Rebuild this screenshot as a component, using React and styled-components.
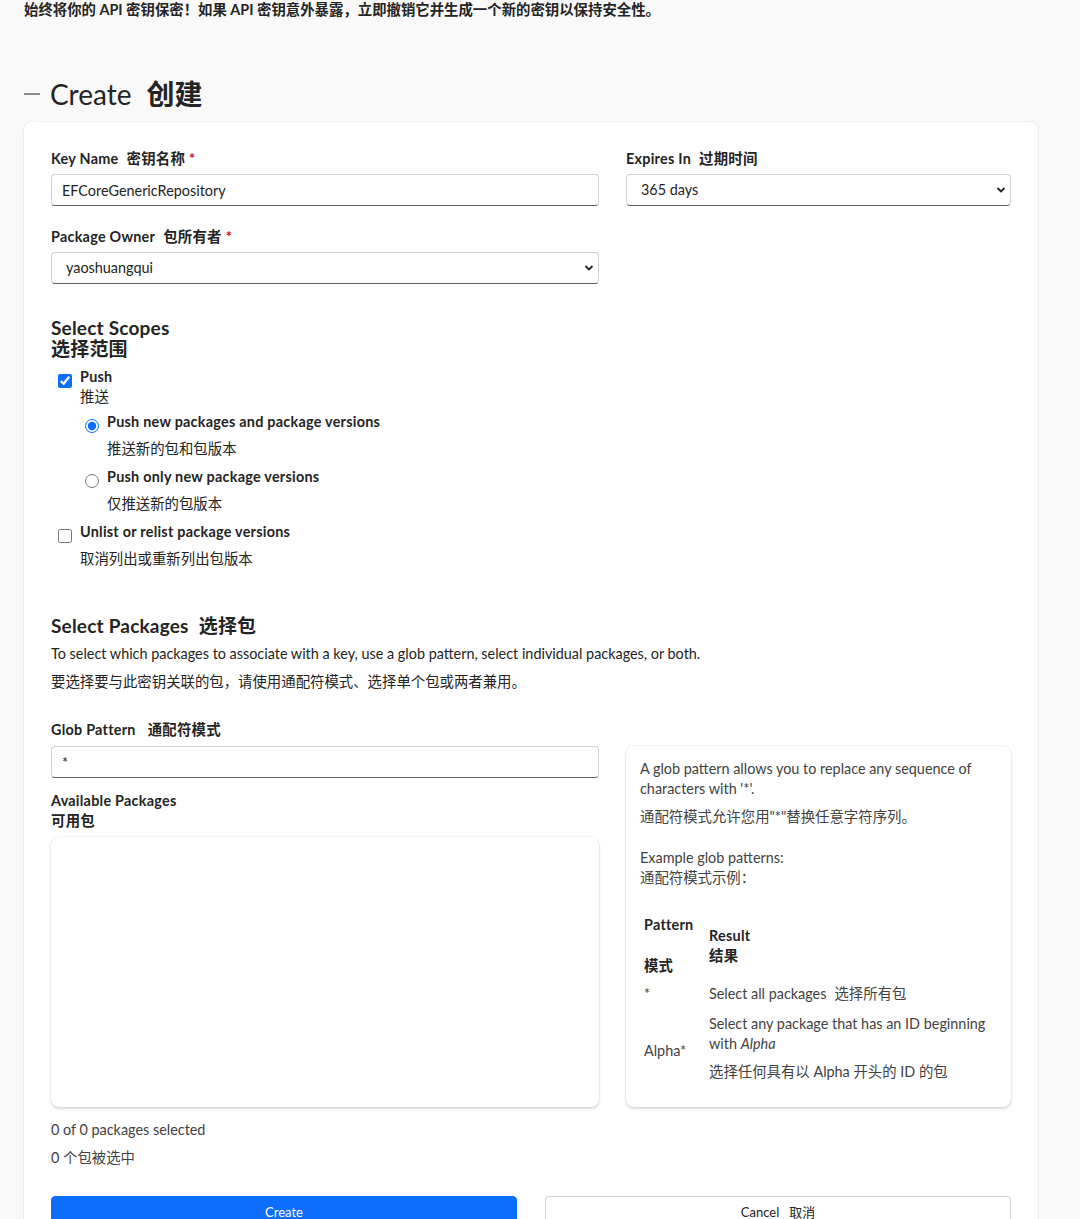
import React from 'react';
import styled, { createGlobalStyle } from 'styled-components';

const GlobalStyle = createGlobalStyle`
  html, body {
    margin: 0;
    padding: 0;
    background: #f9f9f9;
  }
  body {
    font-family: Lato, "Noto Sans CJK SC", sans-serif;
    font-size: 14.4px;
    line-height: 20px;
    color: #242424;
  }
  * { box-sizing: border-box; }
`;

const Page = styled.div`
  padding: 0 42px 0 24px;
`;

const Notice = styled.div`
  font-weight: 700;
  line-height: 20px;
`;

const Title = styled.h1`
  display: flex;
  align-items: center;
  margin: 56px 0 10px;
  font-size: 28px;
  line-height: 36px;
  font-weight: 400;
  & > b {
    margin-left: 15px;
    font-weight: 700;
  }
`;

const Dash = styled.span`
  width: 16px;
  height: 2px;
  margin-right: 10px;
  background: #8a8a8a;
`;

const Card = styled.div`
  background: #fff;
  border-radius: 8px;
  box-shadow: 0 0 2px rgba(0, 0, 0, 0.12), 0 1px 2px rgba(0, 0, 0, 0.08);
  padding: 27px 26px 40px 27px;
`;

const Columns = styled.div`
  display: grid;
  grid-template-columns: 548px 385px;
  column-gap: 27px;
  align-items: ${p => p.$stretch ? 'stretch' : 'start'};
`;

const Stack = styled.div`
  display: flex;
  flex-direction: column;
`;

const Label = styled.label`
  display: block;
  font-weight: 700;
  letter-spacing: 0.25px;
  margin: ${p => p.$top || 0}px 0 ${p => p.$bottom ?? 5}px;
  & > span { margin-left: ${p => p.$gap || 8}px; }
  & > em {
    font-style: normal;
    color: #c50f1f;
    margin-left: 4px;
  }
`;

const TextInput = styled.input`
  width: 100%;
  height: 32px;
  padding: 0 10px;
  border: 1px solid #d1d1d1;
  border-bottom-color: #616161;
  border-radius: 4px;
  font: inherit;
  color: #242424;
  background: #fff;
  outline: none;
`;

const SelectWrap = styled.div`
  position: relative;
  & > svg {
    position: absolute;
    right: 5px;
    top: 12px;
    pointer-events: none;
  }
`;

const Select = styled.select`
  width: 100%;
  height: 32px;
  padding: 0 28px 0 ${p => p.$pad || 14}px;
  border: 1px solid #d1d1d1;
  border-bottom-color: #616161;
  border-radius: 4px;
  font: inherit;
  color: #242424;
  background: #fff;
  appearance: none;
  outline: none;
`;

const SectionTitle = styled.h2`
  margin: ${p => p.$top}px 0 0;
  font-size: 19px;
  line-height: 21px;
  letter-spacing: 0.2px;
  font-weight: 700;
  & > span { margin-left: 10px; }
`;

const CheckRow = styled.label`
  display: flex;
  align-items: flex-start;
  gap: 8px;
  margin: ${p => p.$top || 0}px 0 0 ${p => p.$indent || 7}px;
  font-weight: 700;
  & > div { letter-spacing: 0.25px; }
  & > input {
    width: 14px;
    height: 14px;
    margin: 7px 0 0;
    accent-color: #0d6efd;
    flex: none;
  }
`;

const Sub = styled.div`
  font-weight: 400;
  letter-spacing: 0;
  margin-top: ${p => p.$top || 0}px;
`;

const Text = styled.p`
  margin: ${p => p.$top || 0}px 0 0;
  color: ${p => p.$muted ? '#424242' : '#242424'};
`;

const ListBox = styled.div`
  flex: 1;
  margin-top: 6px;
  min-height: 270px;
  border-radius: 8px;
  background: #fff;
  box-shadow: 0 0 2px rgba(0, 0, 0, 0.12), 0 2px 3px rgba(0, 0, 0, 0.14);
`;

const HelpCard = styled.div`
  border-radius: 8px;
  background: #fff;
  padding: 13px 14px;
  color: #424242;
  box-shadow: 0 0 2px rgba(0, 0, 0, 0.12), 0 2px 3px rgba(0, 0, 0, 0.14);
`;

const PatternTable = styled.div`
  display: grid;
  grid-template-columns: 65px 1fr;
  align-items: center;
  margin-top: 23px;
`;

const Cell = styled.div`
  padding: ${p => p.$pad || '4px 4px'};
  color: ${p => p.$head ? '#242424' : '#424242'};
  font-weight: ${p => p.$head ? 700 : 400};
  letter-spacing: ${p => p.$head ? 0.25 : 0}px;
`;

const Buttons = styled.div`
  display: grid;
  grid-template-columns: 466px 466px;
  column-gap: 28px;
  margin-top: 28px;
`;

const Button = styled.button`
  height: 32px;
  border-radius: 4px;
  font: inherit;
  font-size: 13px;
  border: 1px solid ${p => p.$primary ? '#0d6efd' : '#d1d1d1'};
  background: ${p => p.$primary ? '#0d6efd' : '#fff'};
  color: ${p => p.$primary ? '#fff' : '#242424'};
  padding: 0;
  & > span { margin-left: 10px; }
`;

const Chevron = () => (
  <svg width="10" height="8" viewBox="0 0 10 8">
    <polyline points="1.5,2 5,5.5 8.5,2" fill="none" stroke="#242424" strokeWidth="1.8" />
  </svg>
);

const Dropdown = ({ value, pad }) => (
  <SelectWrap>
    <Select $pad={pad} defaultValue={value}>
      <option>{value}</option>
    </Select>
    <Chevron />
  </SelectWrap>
);

export default function App() {
  return (
    <>
      <GlobalStyle />
      <Page>
        <Notice>始终将你的 API 密钥保密！如果 API 密钥意外暴露，立即撤销它并生成一个新的密钥以保持安全性。</Notice>

        <Title><Dash />Create<b>创建</b></Title>

        <Card>
          <Columns>
            <Stack>
              <Label>Key Name<span>密钥名称</span><em>*</em></Label>
              <TextInput defaultValue="EFCoreGenericRepository" />
              <Label $top={21}>Package Owner<span>包所有者</span><em>*</em></Label>
              <Dropdown value="yaoshuangqui" pad={14} />
            </Stack>
            <Stack>
              <Label>Expires In<span>过期时间</span></Label>
              <Dropdown value="365 days" pad={14} />
            </Stack>
          </Columns>

          <SectionTitle $top={33}>Select Scopes<br />选择范围</SectionTitle>

          <CheckRow $top={8}>
            <input type="checkbox" defaultChecked />
            <div>Push<Sub>推送</Sub></div>
          </CheckRow>
          <CheckRow $top={5} $indent={34}>
            <input type="radio" name="push" defaultChecked />
            <div>Push new packages and package versions<Sub $top={7}>推送新的包和包版本</Sub></div>
          </CheckRow>
          <CheckRow $top={8} $indent={34}>
            <input type="radio" name="push" />
            <div>Push only new package versions<Sub $top={7}>仅推送新的包版本</Sub></div>
          </CheckRow>
          <CheckRow $top={8}>
            <input type="checkbox" />
            <div>Unlist or relist package versions<Sub $top={7}>取消列出或重新列出包版本</Sub></div>
          </CheckRow>

          <SectionTitle $top={46}>Select Packages<span>选择包</span></SectionTitle>
          <Text $top={8}>To select which packages to associate with a key, use a glob pattern, select individual packages, or both.</Text>
          <Text $top={8}>要选择要与此密钥关联的包，请使用通配符模式、选择单个包或两者兼用。</Text>

          <Label $top={28} $gap={12} $bottom={6}>Glob Pattern<span>通配符模式</span></Label>
          <Columns $stretch>
            <Stack>
              <TextInput defaultValue="*" />
              <Label $top={13} $bottom={0}>Available Packages<br />可用包</Label>
              <ListBox />
            </Stack>
            <HelpCard>
              <div>A glob pattern allows you to replace any sequence of characters with '*'.</div>
              <Text $muted $top={8}>通配符模式允许您用"*"替换任意字符序列。</Text>
              <Text $muted $top={21}>Example glob patterns:<br />通配符模式示例：</Text>
              <PatternTable>
                <Cell $head>Pattern<Sub $top={21} style={{ fontWeight: 700 }}>模式</Sub></Cell>
                <Cell $head>Result<br />结果</Cell>
                <Cell>*</Cell>
                <Cell>Select all packages<span style={{ marginLeft: 8 }}>选择所有包</span></Cell>
                <Cell $pad="12px 4px 4px">Alpha*</Cell>
                <Cell $pad="6px 4px 4px">
                  Select any package that has an ID beginning with <i>Alpha</i>
                  <Sub $top={8}>选择任何具有以 Alpha 开头的 ID 的包</Sub>
                </Cell>
              </PatternTable>
            </HelpCard>
          </Columns>

          <Text $muted $top={13}>0 of 0 packages selected</Text>
          <Text $muted $top={8}>0 个包被选中</Text>

          <Buttons>
            <Button $primary>Create</Button>
            <Button>Cancel<span>取消</span></Button>
          </Buttons>
        </Card>
      </Page>
    </>
  );
}
